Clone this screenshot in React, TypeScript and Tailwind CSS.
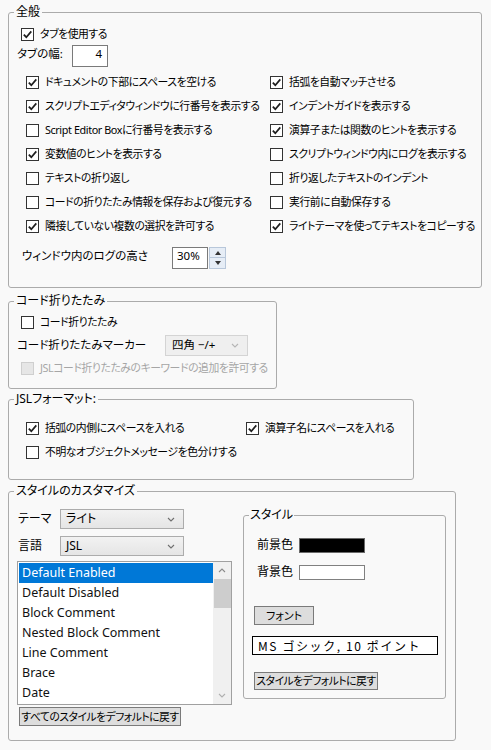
import React from 'react';

const Check = ({ checked = false, disabled = false }: { checked?: boolean; disabled?: boolean }) => (
  <span
    className={`w-[13px] h-[13px] shrink-0 border flex items-center justify-center ${
      disabled ? 'border-[#cfcfcf] bg-[#e6e6e6]' : 'border-[#333333] bg-white'
    }`}
  >
    {checked && (
      <svg width="11" height="11" viewBox="0 0 11 11">
        <path d="M1.8 5.6 L4.3 8.2 L9.3 2.4" stroke="#1e1e1e" strokeWidth="1.7" fill="none" />
      </svg>
    )}
  </span>
);

const CheckRow = ({ label, checked, disabled }: { label: string; checked?: boolean; disabled?: boolean }) => (
  <div className="flex items-center gap-[6px] h-[24px] whitespace-nowrap">
    <Check checked={checked} disabled={disabled} />
    <span className={`text-[10.8px] tracking-[-0.4px] ${disabled ? 'text-[#a6a6a6]' : 'text-black'}`}>{label}</span>
  </div>
);

const Chevron = ({ color = '#6f6f6f' }: { color?: string }) => (
  <svg width="8" height="5" viewBox="0 0 8 5">
    <path d="M1 1 L4 4 L7 1" stroke={color} strokeWidth="1.1" fill="none" />
  </svg>
);

const Select = ({ value, className }: { value: string; className: string }) => (
  <div
    className={`flex items-center justify-between pl-[5px] pr-[8px] border border-[#acacac] bg-gradient-to-b from-[#f2f2f2] to-[#e5e5e5] ${className}`}
  >
    <span>{value}</span>
    <Chevron />
  </div>
);

const Group = ({ title, className, children }: { title: string; className: string; children: React.ReactNode }) => (
  <fieldset className={`ml-[8px] border border-[#ababab] rounded-[3px] ${className}`}>
    <legend className="ml-[5px] px-[2px] leading-[16px] text-[12px]">{title}</legend>
    {children}
  </fieldset>
);

const left = [
  { l: 'ドキュメントの下部にスペースを空ける', c: true },
  { l: 'スクリプトエディタウィンドウに行番号を表示する', c: true },
  { l: 'Script Editor Boxに行番号を表示する', c: false },
  { l: '変数値のヒントを表示する', c: true },
  { l: 'テキストの折り返し', c: false },
  { l: 'コードの折りたたみ情報を保存および復元する', c: false },
  { l: '隣接していない複数の選択を許可する', c: true },
];

const right = [
  { l: '括弧を自動マッチさせる', c: true },
  { l: 'インデントガイドを表示する', c: true },
  { l: '演算子または関数のヒントを表示する', c: true },
  { l: 'スクリプトウィンドウ内にログを表示する', c: false },
  { l: '折り返したテキストのインデント', c: false },
  { l: '実行前に自動保存する', c: false },
  { l: 'ライトテーマを使ってテキストをコピーする', c: true },
];

const styles = [
  'Default Enabled',
  'Default Disabled',
  'Block Comment',
  'Nested Block Comment',
  'Line Comment',
  'Brace',
  'Date',
];

export default function App() {
  return (
    <div className="w-[491px] min-h-[750px] bg-[#f9f9f9] pt-[4px] text-[11px] text-black font-['Noto_Sans','Noto_Sans_CJK_JP',sans-serif] [font-feature-settings:'palt'] overflow-hidden">
      {/* 全般 */}
      <Group title="全般" className="w-[474px] h-[284px]">
        <div className="pl-[8px] pt-[2px]">
          <div className="ml-[4px]">
            <CheckRow label="タブを使用する" checked />
          </div>
          <div className="flex items-start -mt-[1px] text-[11.5px]">
            <span className="w-[55px] leading-[16px] pt-[1px]">タブの幅:</span>
            <div className="w-[36px] h-[22px] border border-[#7a7a7a] bg-white text-right pr-[5px] leading-[16px]">4</div>
          </div>
          <div className="grid grid-cols-[244px_1fr] mt-[3px] ml-[9px]">
            <div>
              {left.map((r) => (
                <CheckRow key={r.l} label={r.l} checked={r.c} />
              ))}
            </div>
            <div>
              {right.map((r) => (
                <CheckRow key={r.l} label={r.l} checked={r.c} />
              ))}
            </div>
          </div>
          <div className="flex items-start mt-[9px] ml-[5px] text-[11.5px]">
            <span className="w-[150px] leading-[16px] pt-[1px]">ウィンドウ内のログの高さ</span>
            <div className="w-[36px] h-[22px] border border-[#7a7a7a] bg-white pl-[4px] leading-[16px]">30%</div>
            <div className="flex flex-col ml-[1px]">
              <div className="w-[17px] h-[11px] border border-[#b8c7da] bg-[#e6edf6] flex items-center justify-center">
                <svg width="6" height="4" viewBox="0 0 6 4"><path d="M0 4 L3 0 L6 4 Z" fill="#333" /></svg>
              </div>
              <div className="w-[17px] h-[11px] border border-t-0 border-[#b8c7da] bg-[#e6edf6] flex items-center justify-center">
                <svg width="6" height="4" viewBox="0 0 6 4"><path d="M0 0 L3 4 L6 0 Z" fill="#333" /></svg>
              </div>
            </div>
          </div>
        </div>
      </Group>

      {/* コード折りたたみ */}
      <Group title="コード折りたたみ" className="w-[269px] h-[96px] mt-[5px]">
        <div className="pl-[8px] pt-[1px]">
          <div className="ml-[4px]">
            <CheckRow label="コード折りたたみ" />
          </div>
          <div className="flex items-center h-[22px] text-[11.5px]">
            <span className="w-[148px]">コード折りたたみマーカー</span>
            <div className="w-[83px] h-[21px] flex items-center justify-between pl-[6px] pr-[8px] border border-[#d4d4d4] bg-[#efefef]">
              <span>四角 −/+</span>
              <Chevron color="#b5b5b5" />
            </div>
          </div>
          <div className="ml-[4px]">
            <CheckRow label="JSLコード折りたたみのキーワードの追加を許可する" disabled />
          </div>
        </div>
      </Group>

      {/* JSLフォーマット */}
      <Group title="JSLフォーマット:" className="w-[406px] h-[89px] mt-[2px]">
        <div className="grid grid-cols-[220px_1fr] pl-[17px] pt-[9px]">
          <div>
            <CheckRow label="括弧の内側にスペースを入れる" checked />
            <CheckRow label="不明なオブジェクトメッセージを色分けする" />
          </div>
          <div>
            <CheckRow label="演算子名にスペースを入れる" checked />
          </div>
        </div>
      </Group>

      {/* スタイルのカスタマイズ */}
      <Group title="スタイルのカスタマイズ" className="w-[448px] h-[258px] mt-[3px]">
        <div className="flex pl-[8px]">
          <div className="w-[215px] pt-[10px]">
            <div className="flex items-center text-[12px]">
              <span className="w-[43px] pl-[1px]">テーマ</span>
              <Select value="ライト" className="w-[124px] h-[20px]" />
            </div>
            <div className="flex items-center mt-[7px] text-[12px]">
              <span className="w-[43px] pl-[1px]">言語</span>
              <Select value="JSL" className="w-[124px] h-[20px]" />
            </div>
            <div className="mt-[5px] w-[215px] h-[144px] border border-[#a0a0a0] bg-white flex text-[12.5px]">
              <div className="flex-1 pt-[1px] pl-[1px]">
                {styles.map((s, i) => (
                  <div
                    key={s}
                    className={`h-[20px] leading-[20px] pl-[3px] ${i === 0 ? 'bg-[#0078d7] text-white' : 'text-[#111]'}`}
                  >
                    {s}
                  </div>
                ))}
              </div>
              <div className="w-[18px] bg-[#f0f0f0] flex flex-col items-center">
                <div className="h-[17px] flex items-center justify-center">
                  <svg width="8" height="5" viewBox="0 0 8 5"><path d="M1 4 L4 1 L7 4" stroke="#8a8a8a" strokeWidth="1.1" fill="none" /></svg>
                </div>
                <div className="w-[17px] h-[29px] bg-[#cdcdcd]" />
                <div className="flex-1" />
                <div className="h-[17px] flex items-center justify-center">
                  <Chevron color="#b0b0b0" />
                </div>
              </div>
            </div>
            <button className="mt-[2px] ml-[2px] w-[162px] h-[19px] border border-[#7a7a7a] bg-[#dddddd] leading-[17px] whitespace-nowrap text-[10.8px] tracking-[-0.5px] px-0">
              すべてのスタイルをデフォルトに戻す
            </button>
          </div>

          <fieldset className="ml-[11px] mt-[8px] w-[203px] h-[192px] border border-[#ababab] rounded-[3px]">
            <legend className="ml-[5px] px-[1px] leading-[16px] text-[12px]">スタイル</legend>
            <div className="flex items-center mt-[13px] ml-[13px] text-[12px]">
              <span className="w-[42px]">前景色</span>
              <div className="w-[66px] h-[15px] bg-black border border-[#6a6a6a]" />
            </div>
            <div className="flex items-center mt-[9px] ml-[13px] text-[12px]">
              <span className="w-[42px]">背景色</span>
              <div className="w-[66px] h-[15px] bg-white border border-[#808080]" />
            </div>
            <button className="block mt-[25px] ml-[10px] w-[60px] h-[19px] border border-[#7a7a7a] bg-[#dddddd] leading-[17px]">
              フォント
            </button>
            <div className="mt-[11px] ml-[8px] w-[186px] h-[19px] border border-black bg-white leading-[17px] pl-[5px] text-[12px] tracking-[1.6px] whitespace-nowrap font-['Noto_Sans_CJK_JP',sans-serif] [font-feature-settings:normal]">
              MS ゴシック, 10 ポイント
            </div>
            <button className="block mt-[17px] ml-[10px] w-[124px] h-[18px] border border-[#7a7a7a] bg-[#dddddd] leading-[16px] whitespace-nowrap text-[10.8px] tracking-[-0.5px] px-0">
              スタイルをデフォルトに戻す
            </button>
          </fieldset>
        </div>
      </Group>
    </div>
  );
}
